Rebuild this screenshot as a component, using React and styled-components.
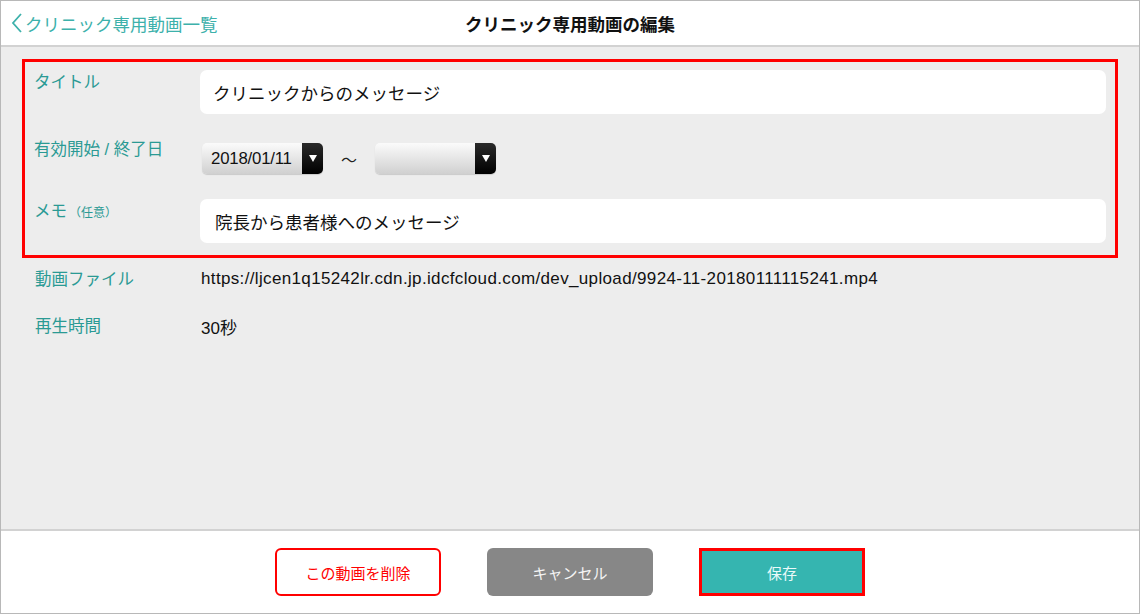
import styled, {createGlobalStyle} from 'styled-components';

const GlobalStyle = createGlobalStyle`
  html, body {
    margin: 0;
    padding: 0;
    background: #fff;
  }
  body {
    font-family: "Liberation Sans", "Noto Sans CJK JP", sans-serif;
  }
`

const Frame = styled.div`
  box-sizing: border-box;
  width: 1140px;
  height: 614px;
  border: 1px solid #b8b8b8;
  display: flex;
  flex-direction: column;
  background: #ededed;
`

const Header = styled.header`
  height: 44px;
  flex-shrink: 0;
  background: #fff;
  border-bottom: 2px solid #d2d2d2;
  display: grid;
  grid-template-columns: 1fr auto 1fr;
  align-items: center;
`

const BackLink = styled.a`
  display: flex;
  align-items: center;
  gap: 1px;
  padding-left: 10px;
  color: #3db1ab;
  font-size: 17.5px;
  text-decoration: none;
  font-family: "Noto Sans CJK JP", sans-serif;

  svg {
    flex-shrink: 0;
  }
`

const Title = styled.h1`
  margin: 0;
  font-size: 17.5px;
  font-weight: bold;
  color: #111;
  font-family: "Noto Sans CJK JP", sans-serif;
`

const Content = styled.main`
  flex: 1;
  padding: 12px 21px 0 21px;
`

const Highlight = styled.section`
  border: 3px solid #ff0000;
  padding: 8px 9px 12px 9px;
`

const FormRow = styled.div`
  display: flex;
  align-items: flex-start;
  padding: ${p => p.$pad || '0'};
`

const Label = styled.div`
  width: 166px;
  flex-shrink: 0;
  color: #2a9a94;
  font-size: 16.5px;
  line-height: 20px;
  margin-top: ${p => p.$top || 0}px;
  font-family: "Liberation Sans", "Noto Sans CJK JP", sans-serif;

  small {
    font-size: 12px;
    margin-left: 2px;
  }
`

const TextInput = styled.div`
  flex: 1;
  height: 44px;
  box-sizing: border-box;
  background: #fff;
  border-radius: 7px;
  display: flex;
  align-items: center;
  padding-left: ${p => p.$indent || 13}px;
  font-size: 17.5px;
  color: #111;
  font-family: "Noto Sans CJK JP", sans-serif;
`

const DateGroup = styled.div`
  display: flex;
  align-items: center;
  margin: 5px 0 0 2px;
`

const Select = styled.div`
  width: 121px;
  height: 31px;
  border-radius: 5px;
  overflow: hidden;
  display: flex;
  background: linear-gradient(#fbfbfb, #d0d0d0);
  box-shadow: 0 1px 1px rgba(0, 0, 0, 0.15);
`

const SelectValue = styled.span`
  flex: 1;
  display: flex;
  align-items: center;
  padding-left: 9px;
  font-size: 16.8px;
  color: #111;
  letter-spacing: -0.2px;
`

const SelectArrow = styled.span`
  width: 21px;
  background: linear-gradient(#2a2a2a, #000);
  display: flex;
  align-items: center;
  justify-content: center;

  &::after {
    content: '';
    border-left: 4px solid transparent;
    border-right: 4px solid transparent;
    border-top: 7px solid #fff;
  }
`

const Tilde = styled.span`
  width: 52px;
  text-align: center;
  font-size: 16px;
  color: #222;
  font-family: "Noto Sans CJK JP", sans-serif;
`

const InfoList = styled.div`
  padding: 11px 0 0 13px;
`

const InfoRow = styled.div`
  display: flex;
  align-items: center;
  height: 20px;
  margin-bottom: 27px;
`

const InfoValue = styled.div`
  font-size: 17px;
  letter-spacing: ${p => p.$spread || 0}px;
  color: #111;
  font-family: "Liberation Sans", "Noto Sans CJK JP", sans-serif;
`

const Footer = styled.footer`
  height: 84px;
  flex-shrink: 0;
  background: #fff;
  border-top: 2px solid #d2d2d2;
  display: flex;
  justify-content: center;
  align-items: flex-start;
  padding-top: 17px;
  box-sizing: border-box;
  gap: 46px;
`

const Button = styled.button`
  width: 166px;
  height: 48px;
  box-sizing: border-box;
  border-radius: 6px;
  font-size: 15px;
  font-family: "Noto Sans CJK JP", sans-serif;
  cursor: pointer;
  border: none;
  background: #878787;
  color: #f4f4f4;

  &.danger {
    background: #fff;
    border: 2px solid #ff0000;
    color: #ff0000;
  }

  &.primary {
    background: #35b5b0;
    border: 3px solid #ff0000;
    border-radius: 0;
    color: #eafaf9;
  }
`

const App = () => {
  return (
    <>
      <GlobalStyle />
      <Frame>
        <Header>
          <BackLink href="#">
            <svg width="13" height="22" viewBox="0 0 13 22">
              <polyline points="10,2 2,11 10,20" fill="none" stroke="#3db1ab" strokeWidth="1.8" />
            </svg>
            クリニック専用動画一覧
          </BackLink>
          <Title>クリニック専用動画の編集</Title>
          <span></span>
        </Header>
        <Content>
          <Highlight>
            <FormRow>
              <Label $top={2}>タイトル</Label>
              <TextInput>クリニックからのメッセージ</TextInput>
            </FormRow>
            <FormRow $pad="24px 0 25px 0">
              <Label $top={1}>有効開始 / 終了日</Label>
              <DateGroup>
                <Select>
                  <SelectValue>2018/01/11</SelectValue>
                  <SelectArrow />
                </Select>
                <Tilde>〜</Tilde>
                <Select>
                  <SelectValue></SelectValue>
                  <SelectArrow />
                </Select>
              </DateGroup>
            </FormRow>
            <FormRow>
              <Label $top={2}>メモ<small>（任意）</small></Label>
              <TextInput $indent={15}>院長から患者様へのメッセージ</TextInput>
            </FormRow>
          </Highlight>
          <InfoList>
            <InfoRow>
              <Label>動画ファイル</Label>
              <InfoValue $spread={0.35}>https://ljcen1q15242lr.cdn.jp.idcfcloud.com/dev_upload/9924-11-20180111115241.mp4</InfoValue>
            </InfoRow>
            <InfoRow>
              <Label>再生時間</Label>
              <InfoValue>30秒</InfoValue>
            </InfoRow>
          </InfoList>
        </Content>
        <Footer>
          <Button className="danger">この動画を削除</Button>
          <Button>キャンセル</Button>
          <Button className="primary">保存</Button>
        </Footer>
      </Frame>
    </>
  )
}

export default App;
